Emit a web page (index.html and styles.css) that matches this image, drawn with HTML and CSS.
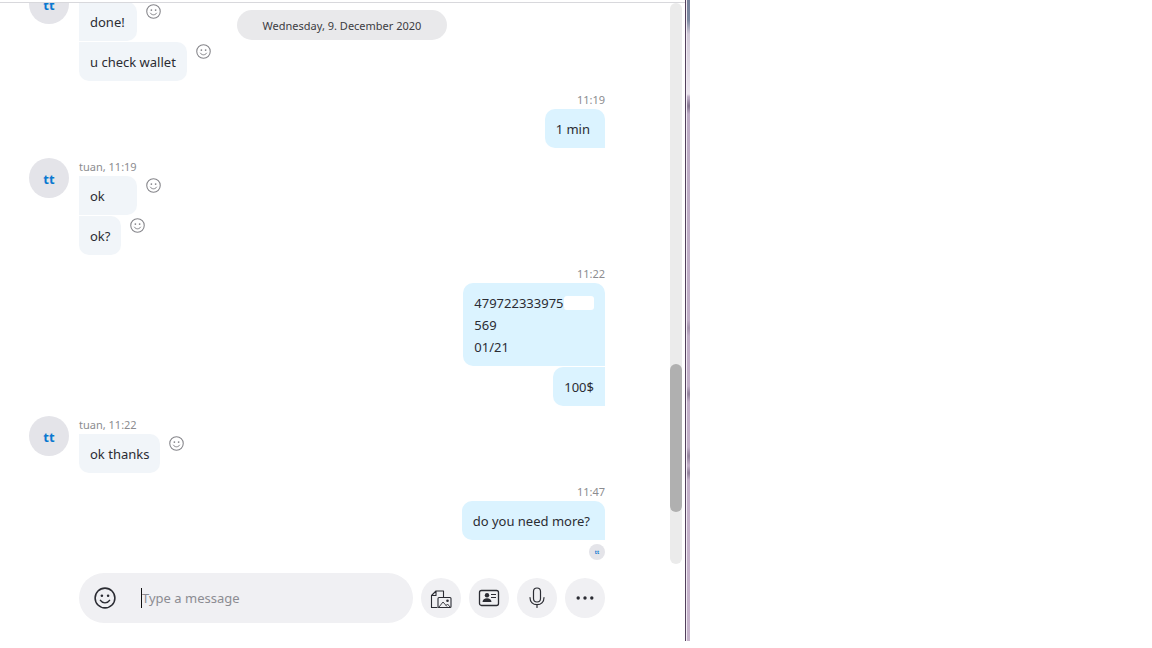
FILE: index.html
```
<!DOCTYPE html>
<html lang="en">
<head>
<meta charset="utf-8">
<title>Chat</title>
<link rel="stylesheet" href="styles.css">
</head>
<body>
<svg class="defs" aria-hidden="true">
  <symbol id="smile" viewBox="0 0 24 24">
    <circle cx="12" cy="12" r="10.800" fill="none" stroke="currentColor" stroke-width="1.700"/>
    <circle cx="8.600" cy="9.600" r="1.400" fill="currentColor"/>
    <circle cx="15.400" cy="9.600" r="1.400" fill="currentColor"/>
    <path d="M7 14.600c1.200 1.800 3 2.700 5 2.700s3.800-.9 5-2.700" fill="none" stroke="currentColor" stroke-width="1.600" stroke-linecap="round"/>
  </symbol>
</svg>
<div class="app">
  <main class="chat">
    <div class="history">
      <div class="messages">
        <section class="group incoming">
          <span class="avatar">tt</span>
          <div class="stack">
            <p class="meta"></p>
            <div class="row"><p class="bubble">done!</p><button class="react" aria-label="React"><svg><use href="#smile"/></svg></button></div>
            <div class="row"><p class="bubble">u check wallet</p><button class="react" aria-label="React"><svg><use href="#smile"/></svg></button></div>
          </div>
        </section>
        <section class="group outgoing">
          <div class="stack">
            <p class="meta">11:19</p>
            <div class="row"><p class="bubble roomy">1 min</p></div>
          </div>
        </section>
        <section class="group incoming">
          <span class="avatar">tt</span>
          <div class="stack">
            <p class="meta">tuan, 11:19</p>
            <div class="row"><p class="bubble">ok</p><button class="react" aria-label="React"><svg><use href="#smile"/></svg></button></div>
            <div class="row"><p class="bubble">ok?</p><button class="react" aria-label="React"><svg><use href="#smile"/></svg></button></div>
          </div>
        </section>
        <section class="group outgoing">
          <div class="stack">
            <p class="meta">11:22</p>
            <div class="row"><p class="bubble">479722333975.<span class="redacted"></span><br>569<br>01/21</p></div>
            <div class="row"><p class="bubble">100$</p></div>
          </div>
        </section>
        <section class="group incoming">
          <span class="avatar">tt</span>
          <div class="stack">
            <p class="meta">tuan, 11:22</p>
            <div class="row"><p class="bubble">ok thanks</p><button class="react" aria-label="React"><svg><use href="#smile"/></svg></button></div>
          </div>
        </section>
        <section class="group outgoing">
          <div class="stack">
            <p class="meta">11:47</p>
            <div class="row"><p class="bubble roomy">do you need more?</p></div>
            <span class="avatar seen">tt</span>
          </div>
        </section>
        <p class="date">Wednesday, 9. December 2020</p>
      </div>
      <div class="track"><div class="thumb"></div></div>
    </div>
    <form class="composer">
      <div class="field">
        <button class="emoji" type="button" aria-label="Emoji"><svg><use href="#smile"/></svg></button>
        <input class="entry" type="text" placeholder="Type a message" aria-label="Type a message">
      </div>
      <button class="tool" type="button" aria-label="Add files">
        <svg viewBox="0 0 24 24" fill="none" stroke="currentColor" stroke-width="1.100" stroke-linejoin="round">
          <path d="M8.500 21.500H2.500V9.500l4.500-4.500h7.500V11M2.500 9.500H7V5"/>
          <rect x="9" y="11.500" width="13" height="10" rx="1"/>
          <path d="M10 21l4-5 4 4.500M17 19.500l1.500-1.500 2.500 3" stroke-width=".9"/>
          <circle cx="18.500" cy="14.800" r="1.300" fill="currentColor" stroke="none"/>
        </svg>
      </button>
      <button class="tool" type="button" aria-label="Send contact">
        <svg viewBox="0 0 24 24" fill="currentColor">
          <rect x="2.500" y="4.500" width="19" height="15" rx="2" fill="none" stroke="currentColor" stroke-width="1.300"/>
          <circle cx="10" cy="9.300" r="2.200"/>
          <path d="M5.500 16c0-2.300 2-3.700 4.500-3.700s4.500 1.400 4.500 3.700z"/>
          <path d="M14 8.500h5M14 11.500h5" stroke="currentColor" stroke-width="1.200"/>
        </svg>
      </button>
      <button class="tool" type="button" aria-label="Record voice">
        <svg viewBox="0 0 24 24" fill="none" stroke="currentColor" stroke-width="1.200" stroke-linecap="round">
          <rect x="8.500" y="2" width="7" height="14" rx="3.500"/>
          <path d="M5 11.500c0 4.500 3 7.200 7 7.200s7-2.700 7-7.200M12 18.700V21.500"/>
        </svg>
      </button>
      <button class="tool" type="button" aria-label="More">
        <svg viewBox="0 0 24 24" fill="currentColor"><circle cx="5.200" cy="12" r="1.700"/><circle cx="12" cy="12" r="1.700"/><circle cx="18.800" cy="12" r="1.700"/></svg>
      </button>
    </form>
  </main>
  <div class="edge"></div>
</div>
</body>
</html>
```
FILE: styles.css
```
* { box-sizing: border-box; }
body {
  margin: 0;
  background: #fff;
  color: #2b2c33;
  font-family: "Noto Sans", "Open Sans", sans-serif;
  font-size: 13px;
}
p { margin: 0; }
button { padding: 0; border: 0; background: none; color: inherit; font: inherit; }
svg { display: block; width: 100%; height: 100%; }
.defs { position: absolute; width: 0; height: 0; }

.app {
  display: flex;
  width: 60%;
  max-width: 690px;
  height: calc(100vh - 7px);
}
.chat {
  flex: 1;
  min-width: 0;
  display: flex;
  flex-direction: column;
  padding-top: 2px;
}
.history {
  flex: 1;
  min-height: 0;
  display: flex;
  border-top: 1px solid #d8d8dc;
  padding-right: 3px;
}
.messages {
  position: relative;
  flex: 1;
  display: flex;
  flex-direction: column;
  justify-content: flex-end;
  gap: 10px;
  overflow: hidden;
  padding: 0 65px 4px 29px;
}
.date {
  position: absolute;
  top: 7px;
  left: 79px;
  right: 65px;
  width: max-content;
  margin: 0 auto;
  padding: 1px 26px 0;
  border-radius: 15px;
  background: #e9e9eb;
  color: #3c3c42;
  font-size: 11px;
  line-height: 29px;
}

.group { display: flex; gap: 10px; }
.outgoing { justify-content: flex-end; }
.stack { display: flex; flex-direction: column; gap: 1px; }
.outgoing .stack { align-items: flex-end; }
.meta {
  min-height: 18px;
  margin-bottom: -1px;
  color: #8c8c90;
  font-size: 11px;
  line-height: 18px;
}
.avatar {
  flex: none;
  width: 40px;
  height: 40px;
  padding-top: 2px;
  border-radius: 50%;
  background: #e4e4e9;
  color: #0a78d0;
  font-size: 13px;
  font-weight: 700;
  line-height: 38px;
  text-align: center;
}
.seen {
  width: 16px;
  height: 16px;
  margin-top: 3px;
  padding: 0;
  font-size: 5px;
  line-height: 16px;
}
.row { display: flex; gap: 9px; }
.bubble {
  padding: 9px 11px 8px;
  border-radius: 10px;
  line-height: 22px;
}
.incoming .bubble { background: #f1f5f9; border-top-left-radius: 0; }
.incoming .meta + .row .bubble { min-width: 58px; }
.incoming .meta + .row:not(:last-child) .bubble { border-bottom-left-radius: 0; }
.outgoing .bubble { background: #dbf3ff; border-bottom-right-radius: 0; }
.outgoing .row + .row .bubble { border-top-right-radius: 0; }
.outgoing .roomy { padding-right: 15px; }
.redacted {
  display: inline-block;
  width: 30px;
  height: 14px;
  margin-left: -3px;
  border-radius: 3px;
  background: #fff;
  vertical-align: text-bottom;
  margin-bottom: 2px;
}
.react {
  width: 15px;
  height: 15px;
  margin-top: 2px;
  color: #85858a;
}

.track {
  width: 12px;
  display: flex;
  flex-direction: column;
  justify-content: flex-end;
  padding-bottom: 52px;
  border-radius: 6px;
  background: #ebebeb;
}
.thumb { height: 148px; border-radius: 6px; background: #b0b0b0; }

.composer {
  display: flex;
  align-items: center;
  gap: 8px;
  padding: 9px 80px 18px 79px;
}
.field {
  flex: 1;
  min-width: 0;
  height: 50px;
  display: flex;
  align-items: center;
  gap: 25px;
  padding: 0 20px 0 15px;
  border-radius: 25px;
  background: #f0f0f3;
}
.emoji { flex: none; width: 22px; height: 22px; }
.entry {
  flex: 1;
  min-width: 0;
  height: 20px;
  padding: 0;
  border: 0;
  border-left: 1px solid #111;
  outline: 0;
  background: none;
  color: inherit;
  font: inherit;
}
.entry::placeholder { color: #8c8c92; opacity: 1; }
.tool {
  flex: none;
  width: 40px;
  height: 40px;
  padding: 8px;
  border-radius: 50%;
  background: #f0f0f3;
}

.edge {
  width: 5px;
  border-left: 1px solid #53405c;
  background:
    linear-gradient(90deg, #f2ecf4 1px, transparent 1px),
    radial-gradient(ellipse 6px 8px at 3px 106px, #776883dd, transparent),
    radial-gradient(ellipse 6px 8px at 3px 328px, #77688366, transparent),
    radial-gradient(ellipse 6px 8px at 3px 394px, #776883aa, transparent),
    radial-gradient(ellipse 6px 9px at 3px 456px, #776883aa, transparent),
    radial-gradient(ellipse 6px 7px at 3px 473px, #776883aa, transparent),
    linear-gradient(#75809a 0, #7c88a0 20px, #d2cad8 34px, #ebe4ed 94px, #bcabc4 97px, #c6b3cb 100%);
}
```
